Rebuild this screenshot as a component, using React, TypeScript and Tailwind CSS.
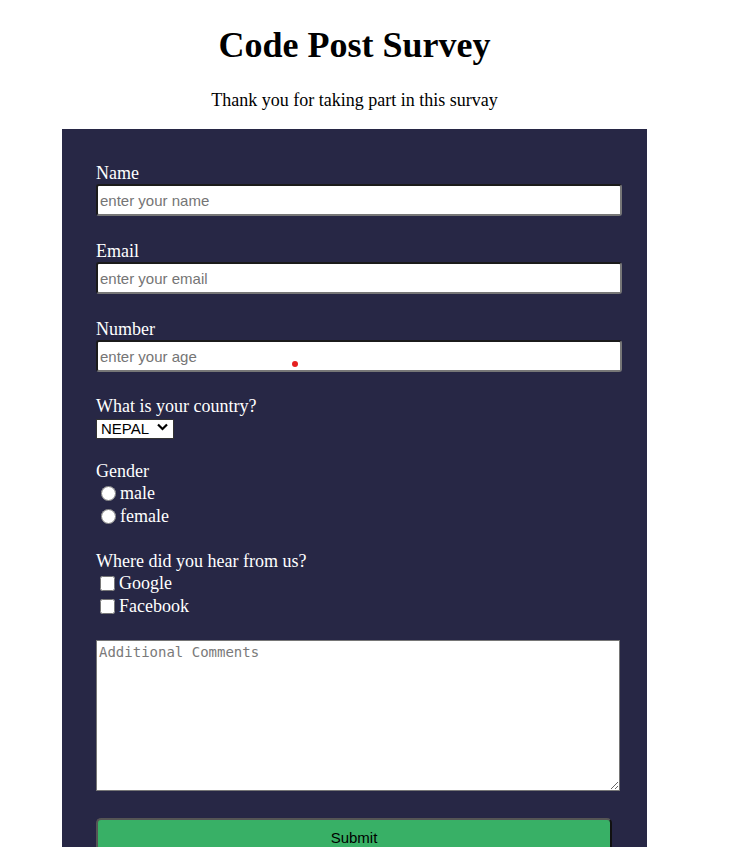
import React from "react";

const serif = { fontFamily: '"Liberation Serif", "Times New Roman", serif' };
const sans = { fontFamily: '"Liberation Sans", Arial, sans-serif' };

function Field({ label, placeholder }: { label: string; placeholder: string }) {
  return (
    <div className="flex flex-col">
      <label className="text-[18px] leading-[22px] text-white">{label}</label>
      <input
        placeholder={placeholder}
        style={sans}
        className="h-[32px] w-[526px] rounded-[3px] border-2 border-t-[#1b1b1b] border-l-[#1b1b1b] border-b-[#777] border-r-[#777] bg-white px-[2px] text-[15px] text-black placeholder:text-[#757575] outline-none"
      />
    </div>
  );
}

export default function App() {
  return (
    <div className="relative min-h-[847px] w-[735px] overflow-hidden bg-white" style={serif}>
      <div className="flex w-[709px] flex-col items-center">
        <h1 className="mt-[25px] text-[36px] font-bold leading-[41px] text-black">Code Post Survey</h1>
        <p className="mt-[24px] text-[18px] leading-[21px] text-black">Thank you for taking part in this survay</p>
        <form className="mt-[18px] flex w-[585px] flex-col bg-[#272745] pb-[40px] pl-[34px] pt-[33px]">
          <div className="flex flex-col gap-[24px]">
            <Field label="Name" placeholder="enter your name" />
            <Field label="Email" placeholder="enter your email" />
            <Field label="Number" placeholder="enter your age" />
          </div>
          <div className="mt-[24px] flex flex-col items-start">
            <label className="text-[18px] leading-[21px] text-white">What is your country?</label>
            <div className="relative">
              <select
                style={sans}
                className="h-[20px] w-[78px] appearance-none border border-[#333] bg-white pl-[4px] text-[15px] leading-[18px] text-black outline-none"
              >
                <option>NEPAL</option>
              </select>
              <svg className="pointer-events-none absolute right-[6px] top-[6px]" width="11" height="8" viewBox="0 0 11 8">
                <path d="M1 1.5 L5.5 6 L10 1.5" stroke="#000" strokeWidth="2.2" fill="none" />
              </svg>
            </div>
          </div>
          <div className="mt-[19px] flex flex-col text-white">
            <span className="text-[18px] leading-[22px]">Gender</span>
            <label className="flex h-[23px] items-center pl-[5px] text-[18px]">
              <input type="radio" name="g" className="m-0 mr-[4px] h-[15px] w-[15px] accent-white" />
              male
            </label>
            <label className="flex h-[23px] items-center pl-[5px] text-[18px]">
              <input type="radio" name="g" className="m-0 mr-[4px] h-[15px] w-[15px] accent-white" />
              female
            </label>
          </div>
          <div className="mt-[22px] flex flex-col text-white">
            <span className="text-[18px] leading-[22px]">Where did you hear from us?</span>
            <label className="flex h-[23px] items-center pl-[4px] text-[18px]">
              <input type="checkbox" className="m-0 mr-[4px] h-[15px] w-[15px]" />
              Google
            </label>
            <label className="flex h-[23px] items-center pl-[4px] text-[18px]">
              <input type="checkbox" className="m-0 mr-[4px] h-[15px] w-[15px]" />
              Facebook
            </label>
          </div>
          <textarea
            placeholder="Additional Comments"
            style={{ fontFamily: '"DejaVu Sans Mono", "Liberation Mono", monospace' }}
            className="mt-[22px] h-[151px] w-[524px] border border-[#767676] bg-white px-[2px] py-[3px] text-[14px] leading-[17px] text-black placeholder:text-[#7a7a7a] outline-none"
          />
          <button
            type="button"
            style={sans}
            className="mt-[27px] h-[40px] w-[516px] rounded-[5px] border-2 border-t-[#555] border-l-[#555] border-r-[#111] border-b-[#111] bg-[#38b066] text-[15px] text-black"
          >
            Submit
          </button>
        </form>
      </div>
      <div className="absolute left-[292px] top-[361px] h-[6px] w-[6px] rounded-full bg-[#e52020]" />
      <div className="absolute bottom-0 left-0 h-[2px] w-[735px] bg-[#3a3a3a]" />
    </div>
  );
}
